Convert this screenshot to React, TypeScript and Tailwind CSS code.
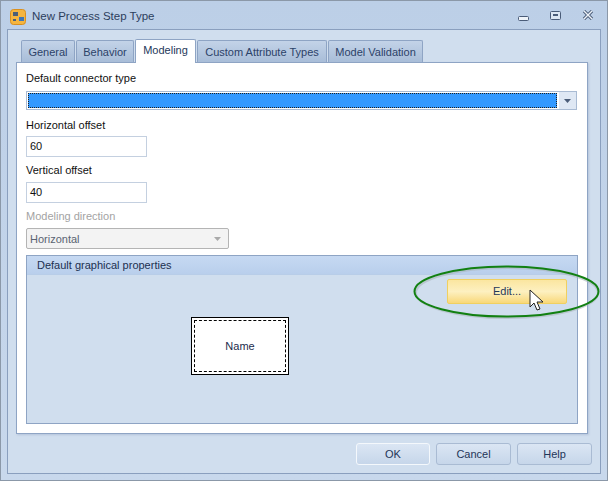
const tabs = [
  { name: 'General', width: 'w-[54px]' },
  { name: 'Behavior', width: 'w-[58px]' },
  { name: 'Modeling', width: 'w-[61px]' },
  { name: 'Custom Attribute Types', width: 'w-[130px]' },
  { name: 'Model Validation', width: 'w-[95px]' },
]

function Tab({ name, width, active }: { name: string; width: string; active: boolean }) {
  if (active) {
    return (
      <div className={`${width} relative z-10 -mb-px -mt-[2px] mr-px flex h-[24px] items-center justify-center rounded-t-[2px] border border-b-0 border-[#8ea4c4] bg-white pb-[2px] text-[#24385a]`}>
        {name}
      </div>
    )
  }
  return (
    <div className={`${width} mr-px flex h-[22px] items-center justify-center rounded-t-[2px] border border-b-0 border-[#8ea4c4] bg-gradient-to-b from-[#c3d3e8] to-[#a8bdd8] pt-px text-[#2c4268]`}>
      {name}
    </div>
  )
}

function DialogButton({ label, focused }: { label: string; focused?: boolean }) {
  return (
    <div className={`flex h-[22px] items-center justify-center rounded-[3px] border bg-gradient-to-b from-[#dbe6f4] to-[#c6d6ea] text-[#1f3558] ${focused ? 'w-[74px] border-[#f4f8fc]' : 'w-[75px] border-[#a9bbd3]'}`}>
      {label}
    </div>
  )
}

function ArrowDown({ color }: { color: string }) {
  return (
    <svg width="7" height="4" viewBox="0 0 7 4">
      <path d="M0 0H7L3.5 4Z" fill={color} />
    </svg>
  )
}

export default function App() {
  return (
    <div className="relative flex h-[481px] w-[608px] flex-col overflow-hidden border border-[#8b98a8] bg-gradient-to-b from-[#bccfe7] to-[#c8d8ec] text-[11px] [font-family:'Liberation_Sans',sans-serif]">
      {/* title bar */}
      <div className="flex h-[28px] shrink-0 items-center pl-[9px] pr-[13px] pt-[3px]">
        <svg width="17" height="16" viewBox="0 0 17 16" className="mr-[5px]">
          <rect x="0.5" y="0.5" width="15" height="15" rx="3" fill="#f5b53f" stroke="#d98f1f" />
          <rect x="3" y="3" width="5" height="4" fill="#4b5f78" />
          <rect x="9" y="8" width="5" height="4" fill="#3f76b5" />
          <rect x="3" y="10" width="3" height="2" fill="#4b5f78" />
        </svg>
        <span className="text-[11.5px] text-[#2c3e5c]">New Process Step Type</span>
        <div className="-mt-[3px] ml-auto flex items-center gap-[21px]">
          <svg width="11" height="5" viewBox="0 0 11 5" className="mt-[6px]">
            <rect x="0.5" y="0.5" width="10" height="4" rx="1" fill="#eef3f9" stroke="#4a5c78" />
          </svg>
          <svg width="11" height="9" viewBox="0 0 11 9">
            <rect x="0.5" y="0.5" width="10" height="8" rx="1" fill="#dce6f2" stroke="#4a5c78" />
            <rect x="3" y="3" width="5" height="2" fill="#4a5c78" />
          </svg>
          <svg width="12" height="10" viewBox="0 0 12 10">
            <path d="M2 1L10 9M10 1L2 9" stroke="#4a5c78" strokeWidth="3.2" />
            <path d="M2 1L10 9M10 1L2 9" stroke="#eef3f9" strokeWidth="1.4" />
          </svg>
        </div>
      </div>

      {/* client area */}
      <div className="mx-[6px] mb-[6px] flex min-h-0 flex-1 flex-col border border-[#8a9fbe] bg-[#d0deee] pl-[8px] pr-[12px] pt-[10px]">
        <div className="flex h-[22px] shrink-0 items-end pl-[5px]">
          {tabs.map((t) => (
            <Tab key={t.name} name={t.name} width={t.width} active={t.name === 'Modeling'} />
          ))}
        </div>

        <div className="flex h-[372px] shrink-0 flex-col border border-[#8ea4c4] bg-white pl-[9px] pr-[9px] pt-[8px] text-[#111] shadow-[1px_1px_2px_#b4c4da]">
          <div className="h-[14px] leading-[14px]">Default connector type</div>
          <div className="mt-[6px] flex h-[19px] w-[551px] items-stretch border border-[#a9bbd3] pl-px">
            <div className="my-px flex-1 border border-dotted border-[#222] bg-[#3399ff]" />
            <div className="ml-[2px] flex w-[17px] items-center justify-center bg-[#dfe8f4]">
              <ArrowDown color="#4a5c78" />
            </div>
          </div>

          <div className="mt-[8px] h-[14px] leading-[14px]">Horizontal offset</div>
          <div className="mt-[4px] flex h-[21px] w-[121px] items-center border border-[#c4d0e0] pl-[3px]">60</div>

          <div className="mt-[6px] h-[14px] leading-[14px]">Vertical offset</div>
          <div className="mt-[5px] flex h-[21px] w-[121px] items-center border border-[#c4d0e0] pl-[3px]">40</div>

          <div className="mt-[6px] h-[14px] leading-[14px] text-[#a3a3a3]">Modeling direction</div>
          <div className="mt-[5px] flex h-[21px] w-[203px] items-center justify-between rounded-[2px] border border-[#b4b4b4] bg-[#f3f3f3] pl-[3px] pr-[7px] pt-px text-[#5a6472]">
            Horizontal
            <ArrowDown color="#a9a9a9" />
          </div>

          <div className="mt-[6px] flex h-[169px] w-[552px] flex-col border border-[#8ea4c4] bg-[#d0deee]">
            <div className="flex h-[19px] items-center border-b border-[#b8cde8] bg-gradient-to-b from-[#c6d9f2] to-[#b9cfec] pl-[10px] text-[#1c3050]">
              Default graphical properties
            </div>
            <div className="flex justify-end pr-[10px] pt-[4px]">
              <div className="flex h-[25px] w-[120px] items-center justify-center rounded-[2px] border border-[#f0d060] bg-gradient-to-b from-[#fbe6a0] via-[#fdf0c0] to-[#f8d878] text-[#24385a]">
                Edit...
              </div>
            </div>
            <div className="ml-[164px] mt-[13px] flex h-[58px] w-[98px] items-center justify-center border border-black bg-white p-[2px]">
              <div className="flex h-full w-full items-center justify-center border border-dashed border-black text-[#1c2c4c]">
                Name
              </div>
            </div>
          </div>
        </div>

        <div className="-mr-[4px] flex flex-1 items-start justify-end gap-[6px] pt-[9px]">
          <DialogButton label="OK" focused />
          <DialogButton label="Cancel" />
          <DialogButton label="Help" />
        </div>
      </div>

      {/* green ellipse callout + cursor drawn over the dialog */}
      <svg className="absolute left-[-1px] top-[-1px]" width="608" height="481" viewBox="0 0 608 481">
        <ellipse cx="507" cy="293" rx="91" ry="25" fill="none" stroke="#aab6bd" strokeWidth="2" opacity="0.6" />
        <ellipse cx="506.5" cy="291.5" rx="92" ry="25" fill="none" stroke="#128012" strokeWidth="2" />
        <path d="M530 290V307L534 303L537 310L540 309L537 302L543 302Z" fill="#fff" stroke="#222" strokeWidth="1" />
      </svg>
    </div>
  )
}
